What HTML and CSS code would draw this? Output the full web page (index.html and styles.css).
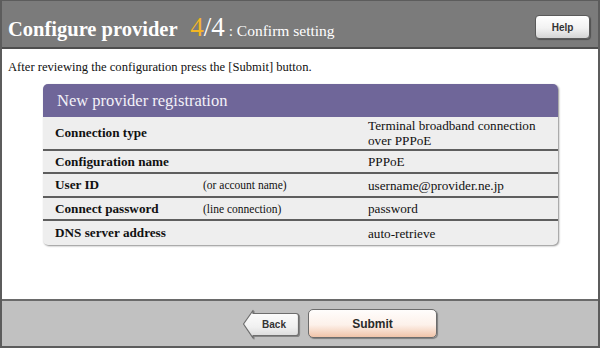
FILE: index.html
```html
<!DOCTYPE html>
<html>
<head>
<meta charset="utf-8">
<link rel="stylesheet" href="styles.css">
</head>
<body>
<div class="window">
  <div class="header">
    <h1 class="title">Configure provider <span class="step"><span class="cur">4</span>/4</span><span class="sub"> : Confirm setting</span></h1>
    <button class="help">Help</button>
  </div>
  <div class="content">
    <p class="intro">After reviewing the configuration press the [Submit] button.</p>
    <div class="panel">
      <div class="panel-head">New provider registration</div>
      <div class="row r1">
        <div class="label">Connection type</div>
        <div class="note"></div>
        <div class="value">Terminal broadband connection over PPPoE</div>
      </div>
      <div class="row r2">
        <div class="label">Configuration name</div>
        <div class="note"></div>
        <div class="value">PPPoE</div>
      </div>
      <div class="row r3">
        <div class="label">User ID</div>
        <div class="note">(or account name)</div>
        <div class="value">username@provider.ne.jp</div>
      </div>
      <div class="row r4">
        <div class="label">Connect password</div>
        <div class="note">(line connection)</div>
        <div class="value">password</div>
      </div>
      <div class="row r5">
        <div class="label">DNS server address</div>
        <div class="note"></div>
        <div class="value">auto-retrieve</div>
      </div>
    </div>
  </div>
  <div class="footer">
    <button class="back">
      <svg class="back-shape" width="58" height="30" viewBox="0 0 58 30">
        <defs>
          <linearGradient id="bg" x1="0" y1="0" x2="0" y2="1">
            <stop offset="0" stop-color="#ffffff"/>
            <stop offset="0.6" stop-color="#f0f0f0"/>
            <stop offset="1" stop-color="#d6d6d6"/>
          </linearGradient>
        </defs>
        <path d="M11 1.5 L11 4.5 L54 4.5 Q56.5 4.5 56.5 7 L56.5 24 Q56.5 26.5 54 26.5 L11 26.5 L11 29 L1.5 15 Z" fill="url(#bg)" stroke="#6e6e6e" stroke-width="1.2" stroke-linejoin="round"/>
      </svg>
      <span class="back-text">Back</span>
    </button>
    <button class="submit">Submit</button>
  </div>
</div>
</body>
</html>
```

FILE: styles.css
```css
* { box-sizing: border-box; }
html, body { margin: 0; padding: 0; }
body { width: 600px; height: 348px; overflow: hidden; background: #fff; }

.window {
  width: 600px;
  height: 348px;
  border: 2px solid #5c5c5c;
  border-top-width: 1px;
  display: flex;
  flex-direction: column;
}

.header {
  height: 48px;
  flex: none;
  background: #7b7b7b;
  border-bottom: 2px solid #4e4e4e;
  display: flex;
  align-items: center;
  justify-content: space-between;
  padding: 0 8px 0 6px;
}

.title {
  margin: 0;
  font-family: "Liberation Serif", serif;
  font-weight: bold;
  font-size: 20.5px;
  line-height: 30px;
  color: #fff;
  white-space: nowrap;
  padding-top: 10px;
}
.step { font-weight: normal; font-size: 27px; margin-left: 8px; color: #fff; }
.cur { color: #f3b625; }
.sub { font-weight: normal; font-size: 15.5px; }

.help {
  width: 55px;
  height: 24px;
  margin-top: 6px;
  border: 1px solid #5a5a5a;
  border-radius: 4px;
  background: linear-gradient(#ffffff, #f2f2f2 55%, #d4d4d4);
  box-shadow: 1px 1px 1px rgba(0,0,0,0.35);
  font-family: "Liberation Sans", Arial, sans-serif;
  font-weight: bold;
  font-size: 10px;
  color: #333;
  padding: 0;
}

.content {
  flex: 1;
  background: #fff;
  padding: 0 0 0 41px;
}

.intro {
  margin: 11px 0 0 -35px;
  font-family: "Liberation Serif", serif;
  font-size: 12.6px;
  line-height: 14px;
  color: #111;
}

.panel {
  width: 515px;
  margin-top: 10px;
  border-radius: 5px;
  background: #eeeeee;
  box-shadow: 1px 1px 2px rgba(0,0,0,0.45);
  overflow: hidden;
  font-family: "Liberation Serif", serif;
}

.panel-head {
  height: 33px;
  background: #6f6699;
  color: #f3f1f8;
  font-size: 16.5px;
  padding: 7px 0 0 14px;
}

.row {
  display: grid;
  grid-template-columns: 148px 165px 1fr;
  align-items: center;
  padding-left: 12px;
  border-bottom: 2px solid #5e5e5e;
  font-size: 13.2px;
  color: #111;
}
.r1 { height: 34px; }
.r2 { height: 23px; }
.r3 { height: 24px; }
.r4 { height: 23px; }
.r5 { height: 24px; border-bottom: none; }

.label { font-weight: bold; white-space: nowrap; }
.note { font-size: 11.5px; white-space: nowrap; }
.value { line-height: 15px; padding-right: 10px; }

.footer {
  height: 47px;
  flex: none;
  background: #c1c1c1;
  border-top: 2px solid #6a6a6a;
  display: flex;
  align-items: center;
  gap: 8px;
  padding-left: 240px;
}

.back {
  position: relative;
  width: 58px;
  height: 30px;
  padding: 0;
  border: none;
  background: none;
}
.back-shape { position: absolute; left: 0; top: 0; filter: drop-shadow(1px 1px 0.5px rgba(0,0,0,0.3)); }
.back-text {
  position: relative;
  margin-left: 6px;
  font-family: "Liberation Sans", Arial, sans-serif;
  font-weight: bold;
  font-size: 10px;
  color: #333;
}

.submit {
  width: 129px;
  height: 29px;
  padding: 0;
  border: 1px solid #6c6c6c;
  border-radius: 5px;
  background: linear-gradient(#fffdfc, #fdf1ea 55%, #f1c4a9);
  box-shadow: 1px 1px 1px rgba(0,0,0,0.35);
  font-family: "Liberation Sans", Arial, sans-serif;
  font-weight: bold;
  font-size: 12px;
  color: #2a2a2a;
}
```
